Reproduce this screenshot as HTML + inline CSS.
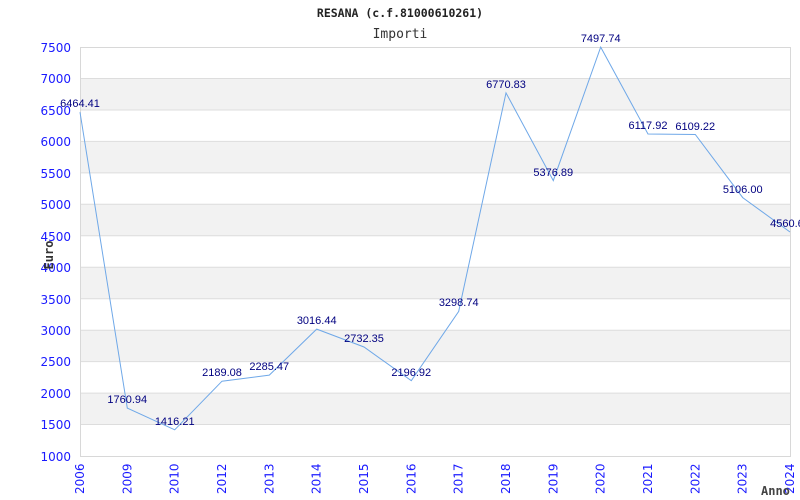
<!DOCTYPE html>
<html><head><style>body{margin:0;background:#fff}svg{display:block}</style></head><body>
<svg width="800" height="500" xmlns="http://www.w3.org/2000/svg">
<rect width="800" height="500" fill="#fff"/>
<g fill="#f2f2f2">
<rect x="80" y="78.5" width="710" height="31.5"/>
<rect x="80" y="141.4" width="710" height="31.5"/>
<rect x="80" y="204.3" width="710" height="31.5"/>
<rect x="80" y="267.2" width="710" height="31.5"/>
<rect x="80" y="330.2" width="710" height="31.5"/>
<rect x="80" y="393.1" width="710" height="31.5"/>
</g>
<g stroke="#ddd" stroke-width="1">
<line x1="80" x2="790" y1="78.5" y2="78.5"/><line x1="80" x2="790" y1="110" y2="110"/>
<line x1="80" x2="790" y1="141.4" y2="141.4"/><line x1="80" x2="790" y1="172.9" y2="172.9"/>
<line x1="80" x2="790" y1="204.3" y2="204.3"/><line x1="80" x2="790" y1="235.8" y2="235.8"/>
<line x1="80" x2="790" y1="267.2" y2="267.2"/><line x1="80" x2="790" y1="298.7" y2="298.7"/>
<line x1="80" x2="790" y1="330.2" y2="330.2"/><line x1="80" x2="790" y1="361.6" y2="361.6"/>
<line x1="80" x2="790" y1="393.1" y2="393.1"/><line x1="80" x2="790" y1="424.5" y2="424.5"/>
</g>
<rect x="80.5" y="47.5" width="710" height="409" fill="none" stroke="#d8d8d8"/>
<polyline fill="none" stroke="#6fa8e8" stroke-width="1" points="80,112.2 127.3,408.1 174.7,429.8 222,381.2 269.3,375.1 316.7,329.1 364,347 411.3,380.7 458.7,311.4 506,92.9 553.3,180.6 600.7,47.1 648,134 695.3,134.5 742.7,197.6 790,232"/>
<g font-family="'DejaVu Sans',sans-serif" font-size="12" fill="#1a1aff" text-anchor="end">
<text x="71" y="52">7500</text><text x="71" y="83">7000</text><text x="71" y="115">6500</text>
<text x="71" y="146">6000</text><text x="71" y="178">5500</text><text x="71" y="209">5000</text>
<text x="71" y="241">4500</text><text x="71" y="272">4000</text><text x="71" y="304">3500</text>
<text x="71" y="335">3000</text><text x="71" y="366">2500</text><text x="71" y="398">2000</text>
<text x="71" y="429">1500</text><text x="71" y="461">1000</text>
</g>
<g font-family="'DejaVu Sans',sans-serif" font-size="12" fill="#1a1aff" text-anchor="start">
<text transform="translate(84,462) rotate(-90)" x="-32">2006</text>
<text transform="translate(131.3,462) rotate(-90)" x="-32">2009</text>
<text transform="translate(178.7,462) rotate(-90)" x="-32">2010</text>
<text transform="translate(226,462) rotate(-90)" x="-32">2012</text>
<text transform="translate(273.3,462) rotate(-90)" x="-32">2013</text>
<text transform="translate(320.7,462) rotate(-90)" x="-32">2014</text>
<text transform="translate(368,462) rotate(-90)" x="-32">2015</text>
<text transform="translate(415.3,462) rotate(-90)" x="-32">2016</text>
<text transform="translate(462.7,462) rotate(-90)" x="-32">2017</text>
<text transform="translate(510,462) rotate(-90)" x="-32">2018</text>
<text transform="translate(557.3,462) rotate(-90)" x="-32">2019</text>
<text transform="translate(604.7,462) rotate(-90)" x="-32">2020</text>
<text transform="translate(652,462) rotate(-90)" x="-32">2021</text>
<text transform="translate(699.3,462) rotate(-90)" x="-32">2022</text>
<text transform="translate(746.7,462) rotate(-90)" x="-32">2023</text>
<text transform="translate(794,462) rotate(-90)" x="-32">2024</text>
</g>
<g font-family="'Liberation Sans',sans-serif" font-size="11" fill="#000080" text-anchor="middle">
<text x="80" y="107">6464.41</text><text x="127.3" y="403">1760.94</text>
<text x="174.7" y="425">1416.21</text><text x="222" y="376">2189.08</text>
<text x="269.3" y="370">2285.47</text><text x="316.7" y="324">3016.44</text>
<text x="364" y="342">2732.35</text><text x="411.3" y="376">2196.92</text>
<text x="458.7" y="306">3298.74</text><text x="506" y="88">6770.83</text>
<text x="553.3" y="176">5376.89</text><text x="600.7" y="42">7497.74</text>
<text x="648" y="129">6117.92</text><text x="695.3" y="130">6109.22</text>
<text x="742.7" y="193">5106.00</text><text x="790" y="227">4560.60</text>
</g>
<text x="400" y="17" text-anchor="middle" font-family="'DejaVu Sans Mono',monospace" font-weight="bold" font-size="11.5" fill="#222">RESANA (c.f.81000610261)</text>
<text x="400" y="38" text-anchor="middle" font-family="'DejaVu Sans Mono',monospace" font-size="13" fill="#333">Importi</text>
<text transform="translate(53,255) rotate(-90)" text-anchor="middle" font-family="'DejaVu Sans Mono',monospace" font-weight="bold" font-size="12" fill="#333">Euro</text>
<text x="761" y="495" font-family="'DejaVu Sans Mono',monospace" font-weight="bold" font-size="12" fill="#444">Anno</text>
</svg>
</body></html>
